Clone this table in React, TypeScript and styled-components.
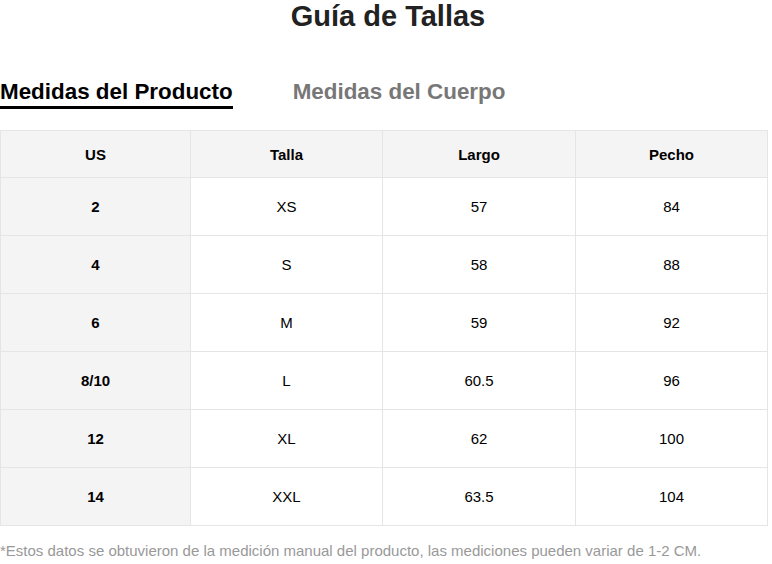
import React from "react";
import styled, { createGlobalStyle } from "styled-components";

const Global = createGlobalStyle`
  html, body { margin: 0; padding: 0; background: #fff; }
  body { font-family: "Liberation Sans", Arial, sans-serif; color: #000; }
`;

const Page = styled.div`
  width: 767px;
  display: flex;
  flex-direction: column;
`;

const Title = styled.h1`
  margin: 0;
  padding-left: 9px;
  text-align: center;
  font-size: 29px;
  line-height: 32px;
  font-weight: 700;
  color: #222;
`;

const Tabs = styled.div`
  display: flex;
  gap: 60px;
  margin-top: 47px;
`;

const Tab = styled.div<{ $active?: boolean }>`
  font-size: 22.4px;
  line-height: 26px;
  font-weight: 700;
  color: ${(p) => (p.$active ? "#000" : "#777")};
  padding-bottom: 1px;
  border-bottom: 3px solid ${(p) => (p.$active ? "#000" : "transparent")};
`;

const Table = styled.table`
  margin-top: 21px;
  width: 767px;
  border-collapse: collapse;
  table-layout: fixed;
  font-size: 15px;
  line-height: 17px;
`;

const Th = styled.th`
  background: #f4f4f4;
  border: 1px solid #e5e5e5;
  padding: 15px 0 14px;
  font-weight: 700;
  text-align: center;
`;

const Td = styled.td<{ $head?: boolean }>`
  background: ${(p) => (p.$head ? "#f4f4f4" : "#fff")};
  font-weight: ${(p) => (p.$head ? 700 : 400)};
  border: 1px solid #e5e5e5;
  padding: 20px 0 20px;
  text-align: center;
`;

const Note = styled.p`
  margin: 16px 0 0;
  font-size: 15px;
  line-height: 17px;
  color: #999;
`;

const rows = [
  ["2", "XS", "57", "84"],
  ["4", "S", "58", "88"],
  ["6", "M", "59", "92"],
  ["8/10", "L", "60.5", "96"],
  ["12", "XL", "62", "100"],
  ["14", "XXL", "63.5", "104"],
];

export default function App() {
  return (
    <Page>
      <Global />
      <Title>Guía de Tallas</Title>
      <Tabs>
        <Tab $active>Medidas del Producto</Tab>
        <Tab>Medidas del Cuerpo</Tab>
      </Tabs>
      <Table>
        <colgroup>
          <col style={{ width: 190 }} />
          <col style={{ width: 192 }} />
          <col style={{ width: 193 }} />
          <col style={{ width: 192 }} />
        </colgroup>
        <thead>
          <tr>
            <Th>US</Th>
            <Th>Talla</Th>
            <Th>Largo</Th>
            <Th>Pecho</Th>
          </tr>
        </thead>
        <tbody>
          {rows.map((r) => (
            <tr key={r[0]}>
              <Td $head>{r[0]}</Td>
              <Td>{r[1]}</Td>
              <Td>{r[2]}</Td>
              <Td>{r[3]}</Td>
            </tr>
          ))}
        </tbody>
      </Table>
      <Note>
        *Estos datos se obtuvieron de la medición manual del producto, las mediciones pueden variar de 1-2 CM.
      </Note>
    </Page>
  );
}
